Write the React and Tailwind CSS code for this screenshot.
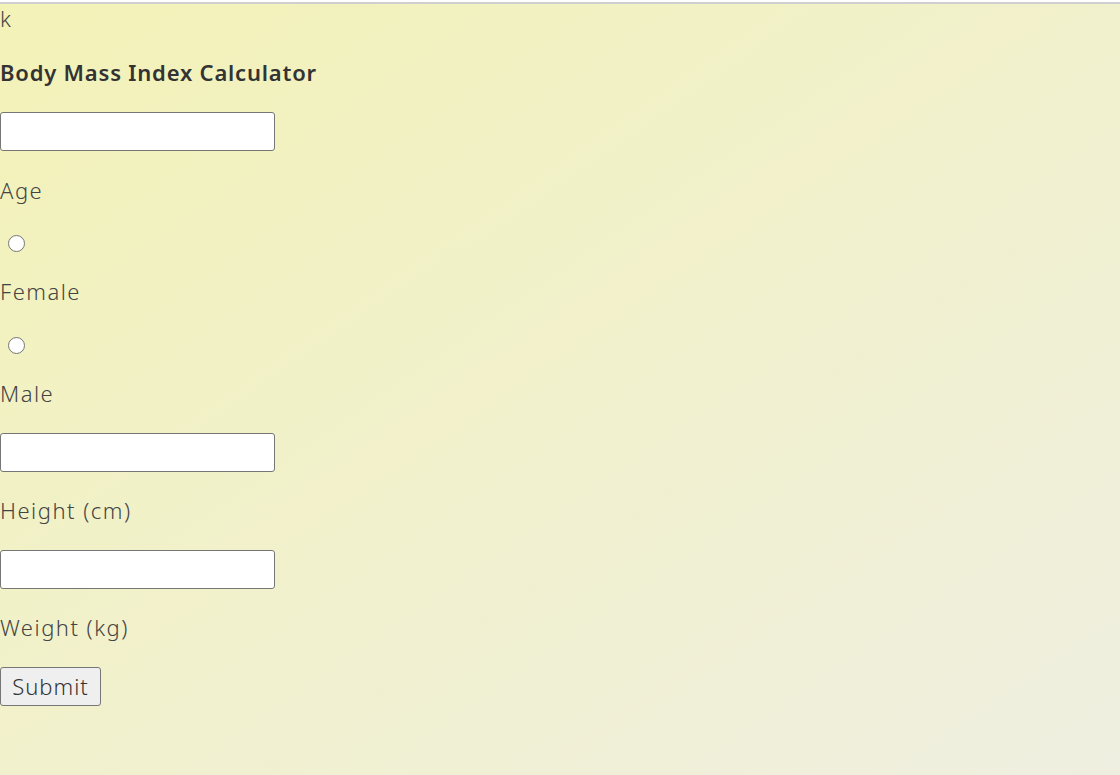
const FONT = "font-['Noto_Sans','Open_Sans',sans-serif]";

function Label({ children, className = '' }) {
  return (
    <div className={`h-[26px] leading-[26px] text-[22px] font-light tracking-[1.5px] text-[#444] ${className}`}>
      {children}
    </div>
  );
}

function TextBox({ className = '' }) {
  return (
    <input
      type="text"
      className={`block w-[275px] h-[39px] bg-white border border-[#767676] rounded-[3px] px-1 ${className}`}
    />
  );
}

function Radio({ name, className = '' }) {
  return (
    <input
      type="radio"
      name={name}
      className={`block w-[17px] h-[17px] ml-[8px] appearance-none rounded-full bg-white border border-[#767676] ${className}`}
    />
  );
}

export default function App() {
  return (
    <div className={`min-h-screen bg-linear-to-br from-[#f3f2b7] to-[#efefe1] ${FONT}`}>
      <div className="h-[2px] bg-white" />
      <div className="h-[2px] bg-[#cfcfcf]" />
      <form className="flex flex-col items-start" onSubmit={(e) => e.preventDefault()}>
        <div className="mt-[1px] h-[26px] leading-[26px] text-[22px] font-light text-[#444]">k</div>
        <h3 className="mt-[28px] h-[26px] leading-[26px] text-[22px] font-semibold tracking-[0.8px] text-[#333]">
          Body Mass Index Calculator
        </h3>
        <TextBox className="mt-[27px]" />
        <Label className="mt-[26px]">Age</Label>
        <Radio name="sex" className="mt-[32px]" />
        <Label className="mt-[26px]">Female</Label>
        <Radio name="sex" className="mt-[33px]" />
        <Label className="mt-[26px]">Male</Label>
        <TextBox className="mt-[27px]" />
        <Label className="mt-[25px]">Height (cm)</Label>
        <TextBox className="mt-[27px]" />
        <Label className="mt-[25px]">Weight (kg)</Label>
        <button
          type="submit"
          className="mt-[27px] w-[101px] h-[39px] bg-[#efefef] border border-[#767676] rounded-[3px] text-[22px] font-light tracking-[1px] text-[#333]"
        >
          Submit
        </button>
      </form>
    </div>
  );
}
